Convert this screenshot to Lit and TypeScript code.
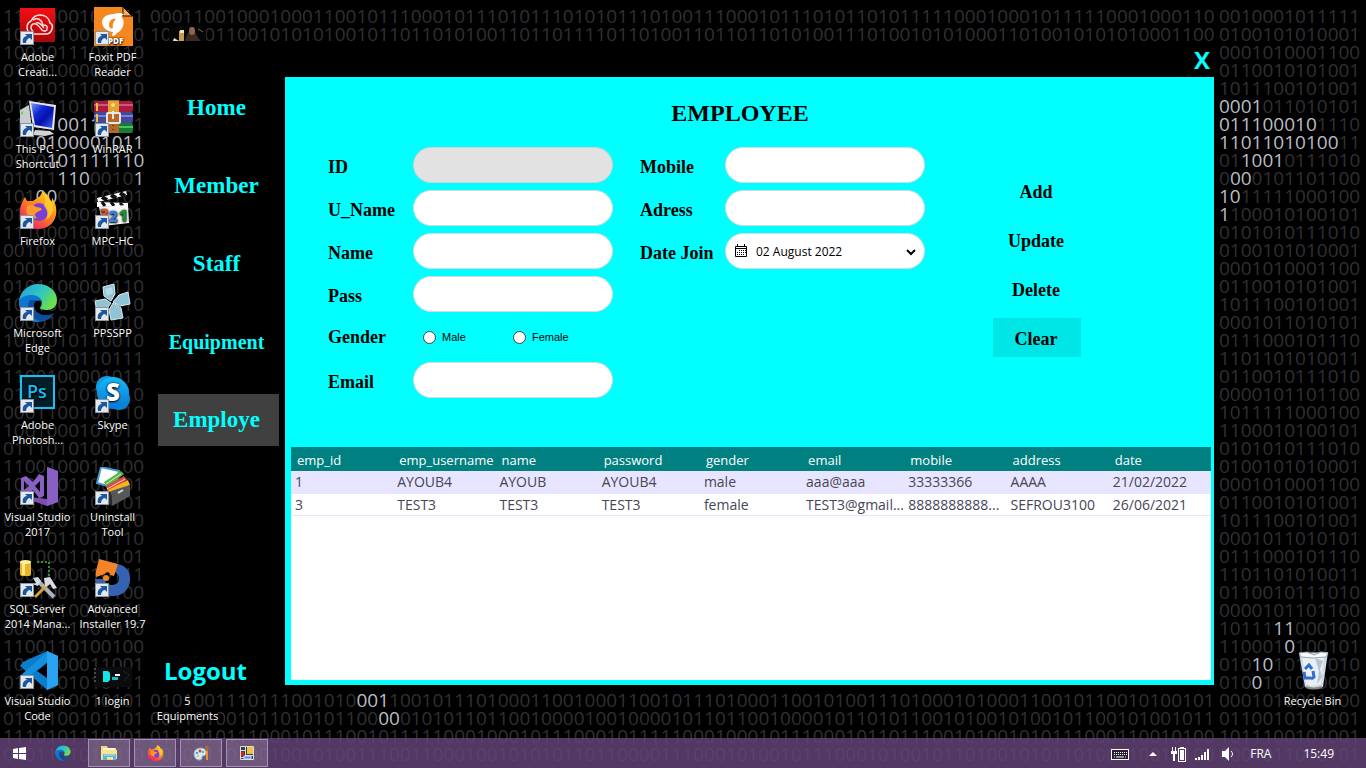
import { LitElement, html, css, svg, nothing, type TemplateResult } from "lit";
import { customElement, state } from "lit/decorators.js";
import { classMap } from "lit/directives/class-map.js";
import { styleMap } from "lit/directives/style-map.js";

/* ---------- wallpaper data: digits in [ ] are lit ---------- */

const LEFT_DIGITS = [
  "1110000100011", "1010110010110", "1001011101110", "0101100001010", "1101011100010",
  "0100110100011", "11001[0011]0001", "010[0100001011]", "0000[101111110]", "01011[110]0010[1]",
  "101[00]01010101", "0101100011001", "1110001001101", "0010100110100", "1001110111001",
  "0101100001110", "1011001111010", "0000101101010", "1001010110010", "0101000110111",
  "1100100001011", "0100101011110", "0001100100110", "1001000101011", "0111010100110",
  "1100100010100", "1001001100101", "1001101101101", "0010001010010", "0011011010110",
  "1010001101101", "1001000010111", "0011001010100", "0101110010011", "0001101001010",
  "1100110100100", "1001100011001", "0101001010111", "1001010010101", "0110100101101",
  "1110101110001", "0101101011010",
];

const RIGHT_CYCLE = [
  "0101010111010", "0100101010001", "0001010001100", "0110010101001", "1011100101001",
  "0001011010101", "0111000101110", "1101101010011", "0110010111010", "0000101101100",
  "1011111000100", "1100010100101",
];

const RIGHT_LIT: Record<number, string> = {
  0: "0010001011111",
  5: "[0001]011010101",
  6: "[011100010]1110",
  7: "[11011010100]11",
  8: "01[1001]0111010",
  9: "0[00]0101101100",
  10: "[10]11111000100",
  11: "[1]100010100101",
  34: "10111[11]000100",
  35: "110001[0]100101",
  36: "010[10]10111010",
  37: "010[0]101010001",
};

const MIDDLE_WIDTH = 98;

const MIDDLE_DIGITS: Record<number, string> = {
  0: "0001100100010001100101110001011101011101010111010011100010111010110101111100010001011111000100",
  1: "1011001100101010100101101101010011011011110110100110110110101001110100101010001101001010101000110",
  2: "01001101001011[0100100110]010111[0100110]0010111001010011010010111001010110010011010110",
  38: "0101001110111001010[001]100101110100011001000110010111010001100101001110100010100011001",
  39: "001101001011010101100[00]0101011011001000010010000101101100100001011010110010100101001",
  40: "0111010111000101110010111110001000101110001011111000100010111000101101110010100101011100",
  41: "1010011010010010100111001100010010101011011000011100010100101110001010010110100101011010",
};

const ROWS = Array.from({ length: 42 }, (_, i) => i);

const fill = (text: string) => {
  if (!text) return text;
  const brackets = text.replace(/[01]/g, "").length;
  return text.padEnd(MIDDLE_WIDTH + brackets, "0110010100101110001").slice(0, MIDDLE_WIDTH + brackets);
};

const lit = (text: string) =>
  text.split(/(\[[01]+\])/).map((part) =>
    part.startsWith("[") ? html`<b class="lit">${part.slice(1, -1)}</b>` : part,
  );

@customElement("binary-wallpaper")
export class BinaryWallpaper extends LitElement {
  static styles = css`
    :host {
      display: block;
      overflow: hidden;
      padding-top: 7px;
      background: #000;
      color: #303033;
      font: 400 19px/18px "Open Sans", "Noto Sans", sans-serif;
    }
    .row {
      display: flex;
      height: 18px;
      white-space: nowrap;
    }
    .left { flex: 0 0 150px; padding-left: 3px; box-sizing: border-box; }
    .middle { flex: 1 1 0; min-width: 0; }
    .right { flex: 0 0 147px; }
    .lit { font-weight: 400; color: #b9bdc4; }
  `;

  render() {
    return ROWS.map(
      (i) => html`<div class="row">
        <span class="left">${lit(LEFT_DIGITS[i])}</span>
        <span class="middle">${lit(fill(MIDDLE_DIGITS[i] ?? ""))}</span>
        <span class="right">${lit(RIGHT_LIT[i] ?? RIGHT_CYCLE[i % 12])}</span>
      </div>`,
    );
  }
}

/* ---------- icons ---------- */

const edgeShape = svg`
  <path d="M1 20C1 10 9 1 20 1c11 0 19 7 19 16 0 7-5 10-10 10-4 0-7-1-7-2 0-1 2-2 2-5 0-4-4-7-9-7-7 0-12 4-14 10z" fill="url(#edgeTop)"/>
  <path d="M1 18c2-4 7-6 13-6 5 0 9 3 10 7-2-2-6-2-8 1-3 5 1 14 9 14 4 0 8-1 10-3-3 5-9 8-16 8C9 39 0 29 1 18z" fill="#0c76d1"/>
  <path d="M12 17c-4 5-2 19 11 21 6 0 11-4 13-8-9 5-20 1-20-8 0-2 1-4 2-5z" fill="#0b4f9c"/>
  <defs><linearGradient id="edgeTop" x1="0" y1="0" x2="1" y2=".5"><stop offset="0" stop-color="#1f9fe6"/><stop offset=".6" stop-color="#33c6c0"/><stop offset="1" stop-color="#6be04a"/></linearGradient></defs>`;

const foxShape = svg`
  <defs><linearGradient id="foxFire" x1=".9" y1="0" x2=".2" y2="1"><stop offset="0" stop-color="#ffe226"/><stop offset=".45" stop-color="#ff8a1c"/><stop offset="1" stop-color="#f5156c"/></linearGradient></defs>
  <path d="M21 6c2-2 3-4 3-6 5 2 8 7 9 11 1-1 1-3 1-4 4 5 5 12 4 17-2 9-9 14-18 14C10 38 2 31 2 21c0-5 1-8 3-11 0-1 1-3 2-4l2 4h5c2 0 3-2 7-4z" fill="url(#foxFire)"/>
  <circle cx="21" cy="21" r="9" fill="#7a3fd6"/>
  <path d="M9 15c4-2 7-1 9 1 3 0 5 1 6 2-1 2-4 2-6 4-2 1-1 3 1 5-5 1-10-2-11-7z" fill="#ff9a2a"/>
  <path d="M24 1c4 5 4 9 2 14 3 4 5 8 2 14 5-3 8-8 7-14-1-6-6-9-11-14z" fill="#ffd52e" opacity=".75"/>`;

const ICONS: Record<string, TemplateResult> = {
  adobe: svg`
    <defs><linearGradient id="adobeRed" x1="0" y1="0" x2="0" y2="1"><stop offset="0" stop-color="#f30f14"/><stop offset="1" stop-color="#a8070c"/></linearGradient></defs>
    <rect x="2" y="1" width="35" height="34" fill="url(#adobeRed)"/>
    <g fill="none" stroke="#ffdcda" stroke-width="1.500">
      <path d="M14 27a7 7 0 0 1-1-13c2-4 5-6 9-6 5 0 9 3 10 8 2 1 3 3 2 6-1 3-3 5-6 5z"/>
      <path d="M15 24a4 4 0 0 1 0-7c3-1 5 1 9 6 2 2 5 1 5-1 1-3-1-4-4-4-1-5-5-8-10-5"/>
      <path d="M18 16c3-1 5 1 8 5"/>
    </g>`,
  foxit: svg`
    <path d="M1 0h29l10 10v29H1z" fill="#f6871f"/><path d="M30 0v9h9z" fill="#f9ab57" stroke="#111" stroke-width="1"/>
    <path d="M21 7c5-2 9-1 10 1-3 0-3 2-1 4 2 5-1 12-6 14-1 2-3 3-5 3 0-2 1-3 1-4-7-1-11-5-11-10 0-4 4-8 12-8z" fill="#fff"/>
    <path d="M23 12c-4-1-7 2-7 6 0 3 2 4 4 3-1-3 0-6 3-9z" fill="#f6871f"/>
    <text x="15" y="37" font-family="Open Sans, sans-serif" font-weight="800" font-size="8" fill="#fff">PDF</text>`,
  pc: svg`
    <defs><linearGradient id="pcBlue" x1="0" y1="0" x2="1" y2="1"><stop offset="0" stop-color="#7f9cf0"/><stop offset=".35" stop-color="#1028d8"/><stop offset=".6" stop-color="#0610a8"/><stop offset="1" stop-color="#3c68ff"/></linearGradient></defs>
    <path d="M2 11l9-5 3 24-12 2z" fill="#c9ccd0"/><path d="M3 13l2-1v3l-2 1z" fill="#5fdb3d"/>
    <path d="M11 2l27 4-2 25-21-3z" fill="#e6e7ea"/><path d="M13 4l23 4-2 21-17-3z" fill="url(#pcBlue)"/>
    <path d="M17 31l15 1 4 3-9 2-12-1z" fill="#d3d4d6"/>`,
  winrar: svg`
    <rect x="1" y="2" width="39" height="11" rx="2" fill="#a81c42"/><rect x="1" y="5" width="39" height="2" fill="#d8537a"/>
    <rect x="1" y="13" width="39" height="11" rx="2" fill="#43489c"/><rect x="1" y="16" width="39" height="2" fill="#7b81d2"/>
    <rect x="1" y="24" width="39" height="10" rx="2" fill="#177a35"/><rect x="20" y="27" width="20" height="2" fill="#49c263"/>
    <path d="M4 4v8M4 15v8" stroke="#f0c437" stroke-width="2"/>
    <rect x="15" y="1" width="11" height="33" fill="#b7692a"/><path d="M15 2h11v11H15z" fill="#e0a531"/>
    <rect x="14" y="14" width="13" height="10" rx="1" fill="none" stroke="#e8e8ea" stroke-width="2"/><path d="M20 12v8" stroke="#e8e8ea" stroke-width="2"/><circle cx="20" cy="6" r="2" fill="#f6e06b"/><path d="M20 26v1M20 30v1" stroke="#6b3610" stroke-width="2"/>`,
  firefox: foxShape,
  mpc: svg`
    <path d="M4 7L33 0l1 4L5 11z" fill="#fff"/><path d="M9 6l5 3M18 4l5 3M27 2l5 3" stroke="#111" stroke-width="4"/>
    <path d="M4 11l31 1v3l-31 1z" fill="#fff"/><path d="M9 11l3 4M18 11l3 4M27 12l3 3" stroke="#111" stroke-width="3"/>
    <path d="M6 16l29-2 1 18-26 3z" fill="#f7f8f8"/>
    <g font-family="Open Sans, sans-serif" font-weight="800" font-size="15"><text x="7" y="29" fill="#d8572a">3</text><text x="16" y="31" fill="#3a7edb">2</text><text x="26" y="30" fill="#18952c">1</text></g>`,
  edge: edgeShape,
  ppsspp: svg`
    <g fill="#8fc3d6" stroke="#dcecf3" stroke-width="1"><path d="M10 4l11-3 1 10-4 7-7-5z"/><path d="M35 9l2 12-10 2-7-4 6-7z"/><path d="M30 35l-12 2-2-10 4-7 8 5z"/><path d="M2 18l10-2 6 4-5 7-9 2z"/></g>
    <path d="M12 6l7-2 1 6-6 3z" fill="#b5dbe8"/>`,
  photoshop: svg`
    <rect x="3" y="1" width="33" height="32" fill="#041d26" stroke="#14c3f5" stroke-width="2"/>
    <text x="9" y="23" font-family="Open Sans, sans-serif" font-weight="600" font-size="18" fill="#19bdf0">Ps</text>`,
  skype: svg`
    <defs><linearGradient id="skypeBlue" x1="0" y1="0" x2="0" y2="1"><stop offset="0" stop-color="#17b8f5"/><stop offset="1" stop-color="#0877d8"/></linearGradient></defs>
    <circle cx="14" cy="12" r="11" fill="#0f9ce6"/><circle cx="26" cy="24" r="11" fill="#0a86d8"/><circle cx="20" cy="18" r="16" fill="url(#skypeBlue)"/>
    <text x="13" y="26" font-family="Open Sans, sans-serif" font-weight="800" font-size="24" fill="#fff">S</text>`,
  vs: svg`
    <path d="M29 0l11 4v31l-11 4-17-6v-3l17 2z" fill="#7b4fb3"/><path d="M29 0l11 4v31l-11 4z" fill="#8a5fc4"/>
    <path d="M3 11l5-2 7 6 6-8 5 2v20l-5 2-6-8-7 5-5-2zM6 14v9l5-4zM22 14l-5 5 5 6z" fill="#8a5fc4" fill-rule="evenodd"/>`,
  uninstall: svg`
    <path d="M8 0l18 4-4 17L4 16z" fill="#fff" stroke="#3e98d6" stroke-width="2"/>
    <path d="M11 15L28 4l3 3-17 14z" fill="#58b53d"/><path d="M13 17l15-10" stroke="#d7f2ce"/><path d="M13 19L31 9l3 4-19 13z" fill="#db4b42"/><path d="M14 22l18-10" stroke="#f8d2cf"/><path d="M15 23l20-10 2 5-20 10z" fill="#f5b51c"/>
    <path d="M18 24l19-6v11l-18 10z" fill="#57585a"/><path d="M10 22l8 3 1 14-9-7z" fill="#2e2f30"/><path d="M25 26l5-3" stroke="#ddd" stroke-width="2"/>`,
  sql: svg`
    <rect x="2" y="2" width="11" height="15" rx="2" fill="#e8b527"/><rect x="4" y="3" width="3" height="13" fill="#fbe88c"/><ellipse cx="7.500" cy="3" rx="5.500" ry="2" fill="#fff0a0"/>
    <path d="M19 3h12v14" fill="none" stroke="#3a8c3a" stroke-width="2" stroke-dasharray="2 2"/>
    <path d="M18 20l18 18" stroke="#aab2bf" stroke-width="4"/><path d="M33 22L17 38" stroke="#d7a13a" stroke-width="3"/>
    <path d="M15 19l5-1 3 4-3 5-6-2 4-1zM26 19l6-1 7 11-4 1-3-5-5 3z" fill="#d7dbe2"/>`,
  installer: svg`
    <path d="M24 5c9 1 14 8 13 17-1 9-8 15-17 15C9 37 2 30 2 20h9c1 3 4 6 8 6 4 0 7-3 7-6 0-3-1-5-4-7z" fill="#3563b1"/>
    <path d="M6 0l19 5-4 12-4-1c1-3-4-4-5-1l-9 3C2 12 5 6 6 0z" fill="#f38427"/><circle cx="13" cy="19" r="3" fill="#f38427"/>`,
  vscode: svg`
    <path d="M29 0l11 5v29l-11 5L2 15l3-4z" fill="#0a7dcb"/><path d="M2 25L29 1v10L6 29z" fill="#1490df"/><path d="M29 0l11 5v29l-11 5z" fill="#29a3ef"/><path d="M29 12v15l-10-7z" fill="#020202"/>`,
  login: svg`
    <rect x="1" y="16" width="38" height="20" fill="#0b0c0e"/><path d="M10 20h5l2 2v7l-2 2h-5z" fill="#12e5e8"/>
    <path d="M19 26h6v3h-6z" fill="#12bfc4"/><path d="M22 24h5" stroke="#fff" stroke-width="2"/><path d="M2 17v15" stroke="#52454a" stroke-width="2" stroke-dasharray="2 2"/><path d="M30 20l6 4-5 6" stroke="#24262a" fill="none"/>`,
  photo: svg`
    <rect x="1" y="19" width="37" height="15" fill="#070606"/><path d="M11 24h5v10h-5z" fill="#c79d4c"/><path d="M12 23h4v3h-4z" fill="#f1e5c8"/>
    <path d="M17 34c1-6 4-8 5-14h4c1 6 3 10 7 14z" fill="#3a2a22"/><ellipse cx="24" cy="24" rx="3" ry="4" fill="#8c6652"/><path d="M6 31l5 3H5z" fill="#eae0d2"/><path d="M30 22l5 3" stroke="#69694b"/>`,
  bin: svg`
    <path d="M6 2l29-1-5 35-9 2-9-2z" fill="#cfdbe6"/><path d="M9 5l22 0-3 28-8 2-7-2z" fill="#e9eff5"/><path d="M6 2l8-1 7 3 7-3 7 1-2 4-13 1-12-1z" fill="#f7f9fb" stroke="#9aa3ab" stroke-width="1"/>
    <path d="M22 7l8 3-3 8 2 8-5 7 2-13z" fill="#b5c5d4"/><path d="M12 18l4-4 3 4M11 21l1 6 6 0M20 20l1 6-3 2" fill="none" stroke="#2c6fd0" stroke-width="3"/><path d="M13 36c4 2 11 2 16 0" stroke="#8b8580" stroke-width="2" fill="none"/>`,
  none: svg``,
};

const shortcutArrow = svg`
  <rect x="2.500" y="24.500" width="13" height="13" fill="#e3e7ee" stroke="#8d949c"/>
  <path d="M5 36c-1-4 1-7 4-7l-2-2h7v6l-2-2c-2 0-4 2-4 5z" fill="#1c55a0"/>`;

interface DesktopItem {
  label: string[];
  icon: string;
  shortcut: boolean;
  row: number;
  column: number;
}

const item = (column: number, row: number, icon: string, label: string[], shortcut = true): DesktopItem => ({
  column, row, icon, label, shortcut,
});

const DESKTOP: DesktopItem[] = [
  item(1, 1, "adobe", ["Adobe", "Creati..."]),
  item(1, 2, "pc", ["This PC -", "Shortcut"]),
  item(1, 3, "firefox", ["Firefox"]),
  item(1, 4, "edge", ["Microsoft", "Edge"]),
  item(1, 5, "photoshop", ["Adobe", "Photosh..."]),
  item(1, 6, "vs", ["Visual Studio", "2017"]),
  item(1, 7, "sql", ["SQL Server", "2014 Mana..."]),
  item(1, 8, "vscode", ["Visual Studio", "Code"]),
  item(2, 1, "foxit", ["Foxit PDF", "Reader"]),
  item(2, 2, "winrar", ["WinRAR"]),
  item(2, 3, "mpc", ["MPC-HC"]),
  item(2, 4, "ppsspp", ["PPSSPP"]),
  item(2, 5, "skype", ["Skype"]),
  item(2, 6, "uninstall", ["Uninstall", "Tool"]),
  item(2, 7, "installer", ["Advanced", "Installer 19.7"]),
  item(2, 8, "login", ["1 login"], false),
  item(3, 1, "photo", [], false),
  item(3, 8, "none", ["5", "Equipments"], false),
  item(5, 8, "bin", ["Recycle Bin"], false),
];

@customElement("desktop-icons")
export class DesktopIcons extends LitElement {
  static styles = css`
    :host {
      display: grid;
      grid-template-columns: repeat(3, 75px) 1fr 75px;
      grid-template-rows: repeat(8, 92px);
      padding-right: 16px;
      font: 11px/15px "Open Sans", "Noto Sans", sans-serif;
    }
    .item {
      display: flex;
      flex-direction: column;
      align-items: center;
      gap: 2px;
      padding-top: 7px;
      color: #fff;
      text-decoration: none;
      text-align: center;
      white-space: nowrap;
      text-shadow: 0 1px 2px #000, 0 0 2px #000;
    }
    .icon { display: block; width: 40px; height: 40px; }
    .line { display: block; }
  `;

  render() {
    return DESKTOP.map(
      (d) => html`<a
        class="item"
        href="#"
        style=${styleMap({ gridArea: `${d.row} / ${d.column}` })}
      >
        <svg class="icon" viewBox="0 0 40 40" aria-hidden="true">
          ${ICONS[d.icon]}${d.shortcut ? shortcutArrow : nothing}
        </svg>
        <span>${d.label.map((l) => html`<span class="line">${l}</span>`)}</span>
      </a>`,
    );
  }
}

/* ---------- employee window ---------- */

const NAV = ["Home", "Member", "Staff", "Equipment", "Employe"];
const COLUMNS = ["emp_id", "emp_username", "name", "password", "gender", "email", "mobile", "address", "date"];
const EMPLOYEES = [
  ["1", "AYOUB4", "AYOUB", "AYOUB4", "male", "aaa@aaa", "33333366", "AAAA", "21/02/2022"],
  ["3", "TEST3", "TEST3", "TEST3", "female", "TEST3@gmail...", "8888888888...", "SEFROU3100", "26/06/2021"],
];

@customElement("employee-window")
export class EmployeeWindow extends LitElement {
  @state() private section = "Employe";

  static styles = css`
    :host {
      display: grid;
      grid-template-columns: 139px 1fr;
      grid-template-rows: 31px 1fr;
      padding: 0 5px 6px 0;
      background: #000;
      font-family: "Liberation Serif", "Times New Roman", serif;
    }
    button, input {
      font: inherit;
      color: inherit;
      margin: 0;
      border: 0;
      background: none;
      box-sizing: border-box;
    }
    button { cursor: pointer; }
    .nav {
      grid-row: 1 / 3;
      display: flex;
      flex-direction: column;
      gap: 26px;
      padding: 36px 6px 0 12px;
      color: #0ff;
      font-size: 23px;
      font-weight: 700;
    }
    .link { height: 52px; padding: 0 4px 0 0; }
    .long { font-size: 20px; }
    .current { background: #404040; }
    .logout {
      margin-top: auto;
      padding: 0 6px;
      text-align: left;
      font: 700 24px/28px "Open Sans", "Noto Sans", sans-serif;
    }
    .bar { display: flex; justify-content: flex-end; align-items: flex-start; }
    .close {
      width: 24px;
      padding: 0;
      color: #0ff;
      font: 700 24px/28px "Open Sans", "Noto Sans", sans-serif;
    }
    .panel {
      display: flex;
      flex-direction: column;
      min-height: 0;
      background: #0ff;
      color: #000;
      padding: 20px 3px 5px 6px;
    }
    .title {
      margin: 0 0 18px;
      padding-right: 22px;
      text-align: center;
      font-size: 24px;
      line-height: 32px;
    }
    .form {
      display: flex;
      align-items: flex-start;
      padding-left: 37px;
      font-size: 18px;
      font-weight: 700;
    }
    .fields {
      display: grid;
      grid-template-columns: 85px 200px;
      grid-auto-rows: 36px;
      row-gap: 7px;
      align-items: center;
      margin-right: 27px;
    }
    .label { padding-top: 4px; }
    .pill {
      width: 200px;
      height: 36px;
      padding: 0 14px;
      border: 1px solid #d5dadf;
      border-radius: 18px;
      background: #fff;
      font: 12px "Open Sans", "Noto Sans", sans-serif;
      box-sizing: border-box;
    }
    .pill:disabled { background: #e2e2e2; border-color: #d0d0d0; }
    .date { display: flex; align-items: center; padding: 0 7px 0 8px; gap: 8px; }
    .value { flex: 1; min-width: 0; padding: 0; }
    .calendar { flex: none; width: 14px; height: 14px; }
    .open { display: flex; padding: 2px 1px 0 1px; }
    .options {
      display: grid;
      grid-template-columns: 90px 90px;
      padding-left: 10px;
      font: 11px/16px "Liberation Sans", Arial, sans-serif;
    }
    .option { display: flex; align-items: center; gap: 6px; }
    .radio {
      appearance: none;
      width: 13px;
      height: 13px;
      border: 1px solid #444;
      border-radius: 50%;
      background: #fff;
    }
    .radio:checked { box-shadow: inset 0 0 0 2px #fff; background: #222; }
    .actions {
      display: grid;
      grid-auto-rows: 39px;
      width: 88px;
      row-gap: 10px;
      margin-left: 41px;
      padding-top: 24px;
    }
    .action { padding: 3px 2px 0 0; }
    .hot { background: #00e5e5; }
    .sheet { flex: 1; min-height: 0; margin-top: 49px; background: #fff; }
    .table {
      width: 100%;
      table-layout: fixed;
      border-collapse: collapse;
      font: 14px/20px "Open Sans", "Noto Sans", sans-serif;
      text-align: left;
      color: #474556;
    }
    .head {
      height: 24px;
      padding: 2px 0 0 6px;
      box-sizing: border-box;
      background: #008080;
      color: #fff;
      font-size: 13px;
      font-weight: 400;
    }
    .cell {
      height: 22px;
      padding: 1px 0 0 4px;
      box-sizing: border-box;
      white-space: nowrap;
      border-bottom: 1px solid #e7e5ff;
    }
    .row:nth-child(odd) { background: #e7e5ff; }
  `;

  private field(id: string, label: string, disabled = false) {
    return html`<label class="label" for=${id}>${label}</label>
      <input class="pill" id=${id} type="text" ?disabled=${disabled} />`;
  }

  render() {
    return html`
      <nav class="nav">
        ${NAV.map(
          (name) => html`<button
            class=${classMap({ link: true, long: name === "Equipment", current: name === this.section })}
            @click=${() => (this.section = name)}
          >${name}</button>`,
        )}
        <button class="logout">Logout</button>
      </nav>
      <header class="bar"><button class="close">X</button></header>
      <main class="panel">
        <h1 class="title">EMPLOYEE</h1>
        <form class="form" @submit=${(e: Event) => e.preventDefault()}>
          <div class="fields">
            ${this.field("id", "ID", true)} ${this.field("uname", "U_Name")}
            ${this.field("name", "Name")} ${this.field("pass", "Pass")}
            <span id="gender">Gender</span>
            <div class="options" role="radiogroup" aria-labelledby="gender">
              <label class="option"><input class="radio" type="radio" name="gender" value="male" />Male</label>
              <label class="option"><input class="radio" type="radio" name="gender" value="female" />Female</label>
            </div>
            ${this.field("email", "Email")}
          </div>
          <div class="fields">
            ${this.field("mobile", "Mobile")} ${this.field("adress", "Adress")}
            <label class="label" for="joined">Date Join</label>
            <div class="pill date">
              <svg class="calendar" viewBox="0 0 14 14" aria-hidden="true">
                <path d="M1.500 2.500h11v10h-11zM1 4.500h12M3.500 0v3M10.500 0v3" fill="none" stroke="#000"/>
                <path d="M5 6.500h7M3 8.500h9M3 10.500h7" stroke="#000" stroke-dasharray="1 1"/>
              </svg>
              <input class="value" id="joined" type="text" value="02 August 2022" readonly />
              <button class="open" type="button" aria-label="Open calendar">
                <svg width="10" height="8" viewBox="0 0 10 8"><path d="M1 2l4 4 4-4" fill="none" stroke="#000" stroke-width="2"/></svg>
              </button>
            </div>
          </div>
          <div class="actions">
            <button class="action">Add</button>
            <button class="action">Update</button>
            <button class="action">Delete</button>
            <button class="action hot" type="reset">Clear</button>
          </div>
        </form>
        <div class="sheet">
          <table class="table">
            <thead>
              <tr>${COLUMNS.map((c) => html`<th class="head" scope="col">${c}</th>`)}</tr>
            </thead>
            <tbody>
              ${EMPLOYEES.map(
                (r) => html`<tr class="row">${r.map((v) => html`<td class="cell">${v}</td>`)}</tr>`,
              )}
            </tbody>
          </table>
        </div>
      </main>
    `;
  }
}

/* ---------- taskbar ---------- */

const TASKS: { name: string; open: boolean; icon: TemplateResult }[] = [
  { name: "Edge", open: false, icon: svg`<svg width="16" height="16" viewBox="0 0 40 40">${edgeShape}</svg>` },
  {
    name: "File Explorer",
    open: true,
    icon: svg`<svg width="18" height="16" viewBox="0 0 18 16"><path d="M1 1h6l1 2h8v12H1z" fill="#efd67a"/><path d="M3 3h12v4H3z" fill="#fff6cf"/><path d="M1 5h16v9H1z" fill="#f8e391"/><path d="M3 15V9h13v6h-3v-3H7v3z" fill="#58b6e2"/><path d="M4 10h11" stroke="#bfe5f7"/></svg>`,
  },
  { name: "Firefox", open: true, icon: svg`<svg width="17" height="17" viewBox="0 0 40 40">${foxShape}</svg>` },
  {
    name: "Paint",
    open: true,
    icon: svg`<svg width="17" height="16" viewBox="0 0 17 16"><path d="M1 9c0-4 3-6 7-6s6 3 5 6-4 1-4 3 0 3-3 3-5-3-5-6z" fill="#d7e9f5" stroke="#7fa4bd"/><circle cx="4" cy="8" r="1" fill="#2d74d5"/><circle cx="7" cy="6" r="1.500" fill="#d6452e"/><circle cx="10" cy="7" r="1" fill="#39a23b"/><circle cx="5" cy="11" r="1" fill="#e9b622"/><path d="M12 1h4l-1 5h-2z" fill="#a96a36"/><path d="M13 6h2v9h-2z" fill="#f09326"/></svg>`,
  },
  {
    name: "Gym manager",
    open: true,
    icon: svg`<svg width="14" height="14" viewBox="0 0 14 14"><path d="M.5.5h13v13H.5z" fill="#3f3d45" stroke="#ddd"/><path d="M0 4.500h5M5.500 0v14M5 9.500h9M0 11.500h5" stroke="#ddd"/><path d="M7 1h6v7H7z" fill="#f1c340"/><path d="M1 6h3v4H1z" fill="#d32018"/><path d="M4 10h7v3H4z" fill="#4f8ff0" stroke="#ddd"/></svg>`,
  },
];

@customElement("task-bar")
export class TaskBar extends LitElement {
  static styles = css`
    :host {
      display: flex;
      justify-content: space-between;
      height: 30px;
      background: rgba(103, 70, 124, 0.8);
      color: #fff;
      font: 12px/30px "Open Sans", "Noto Sans", sans-serif;
    }
    .apps { display: flex; gap: 4px; }
    .task {
      display: flex;
      align-items: center;
      justify-content: center;
      box-sizing: border-box;
      width: 42px;
      height: 28px;
      margin: 1px 0;
      padding: 0;
      border: 1px solid transparent;
      background: none;
    }
    .start { width: 38px; }
    .open { border-color: #a493b0; background: rgba(255, 255, 255, 0.16); }
    .tray { display: flex; align-items: center; padding: 2px 32px 0 0; }
    .glyph { display: block; }
    .keyboard { margin-right: 20px; }
    .caret { margin-right: 14px; }
    .power { margin-right: 9px; }
    .signal { margin-right: 12px; }
    .sound { margin-right: 15px; }
    .lang { margin-right: 32px; }
  `;

  render() {
    return html`
      <div class="apps">
        <button class="task start" aria-label="Start">
          <svg width="13" height="13" viewBox="0 0 13 13"><path d="M0 2l5-1v5H0zM6 1l7-1v6H6zM0 7h5v5l-5-1zM6 7h7v6l-7-1z" fill="#fff"/></svg>
        </button>
        ${TASKS.map(
          (t) => html`<button class=${classMap({ task: true, open: t.open })} aria-label=${t.name}>${t.icon}</button>`,
        )}
      </div>
      <div class="tray">
        <svg class="glyph keyboard" width="18" height="11" viewBox="0 0 18 11">
          <rect x=".5" y=".5" width="17" height="10" fill="#2a1c35" stroke="#fff"/>
          <path d="M3 3.500h13M3 5.500h13" stroke="#fff" stroke-dasharray="1 1"/><path d="M3 8h12" stroke="#fff" stroke-dasharray="1 1 8 1"/>
        </svg>
        <svg class="glyph caret" width="8" height="4" viewBox="0 0 8 4"><path d="M0 4l4-4 4 4z" fill="#fff"/></svg>
        <svg class="glyph power" width="15" height="15" viewBox="0 0 15 15">
          <path d="M1.500 0v4M4.500 0v4" stroke="#fff"/><path d="M0 4h6v3H0zM2 7h2v7H2z" fill="#fff"/>
          <rect x="7.500" y="1.500" width="7" height="13" fill="none" stroke="#fff"/><path d="M9 .5h4" stroke="#fff"/><rect x="9" y="3" width="4" height="10" fill="#fff"/>
        </svg>
        <svg class="glyph signal" width="15" height="12" viewBox="0 0 15 12">
          <path d="M1 12v-2M4 12V9M7 12V7M10 12V4M13 12V1" stroke="#fff" stroke-width="2"/>
        </svg>
        <svg class="glyph sound" width="13" height="14" viewBox="0 0 13 14">
          <path d="M0 4h3l4-4v14l-4-4H0z" fill="#fff"/><path d="M9 4c2 2 2 4 0 6" fill="none" stroke="#fff" stroke-width="1"/>
        </svg>
        <span class="lang">FRA</span>
        <time>15:49</time>
      </div>
    `;
  }
}

/* ---------- desktop ---------- */

@customElement("app-root")
export class AppRoot extends LitElement {
  static styles = css`
    :host {
      display: flex;
      flex-direction: column;
      position: relative;
      height: 100vh;
      overflow: hidden;
      background: #000;
    }
    .wallpaper { position: absolute; inset: 0; }
    .icons { position: relative; flex: 1; min-height: 0; }
    .window { position: absolute; inset: 46px 147px 77px 146px; }
    .taskbar { position: relative; }
  `;

  render() {
    return html`
      <binary-wallpaper class="wallpaper" aria-hidden="true"></binary-wallpaper>
      <desktop-icons class="icons"></desktop-icons>
      <employee-window class="window"></employee-window>
      <task-bar class="taskbar"></task-bar>
    `;
  }
}
